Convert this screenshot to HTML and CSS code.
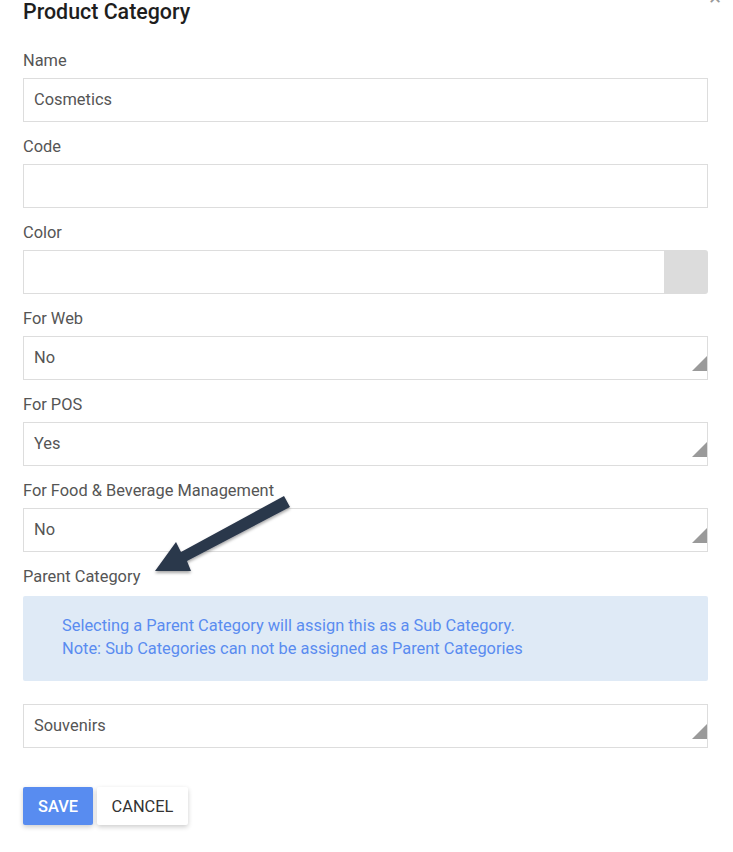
FILE: index.html
```html
<!DOCTYPE html>
<html>
<head>
<meta charset="utf-8">
<link rel="stylesheet" href="styles.css">
</head>
<body>
<div class="modal">
  <span class="close">×</span>
  <h1 class="title">Product Category</h1>

  <div class="field">
    <label class="label">Name</label>
    <div class="input">Cosmetics</div>
  </div>
  <div class="field">
    <label class="label">Code</label>
    <div class="input"></div>
  </div>
  <div class="field">
    <label class="label">Color</label>
    <div class="input-group">
      <div class="input grow"></div>
      <div class="addon"></div>
    </div>
  </div>
  <div class="field">
    <label class="label">For Web</label>
    <div class="input select">No</div>
  </div>
  <div class="field">
    <label class="label">For POS</label>
    <div class="input select">Yes</div>
  </div>
  <div class="field">
    <label class="label">For Food &amp; Beverage Management</label>
    <div class="input select">No</div>
  </div>
  <div class="field">
    <label class="label">Parent Category</label>
    <div class="info">
      <p>Selecting a Parent Category will assign this as a Sub Category.</p>
      <p>Note: Sub Categories can not be assigned as Parent Categories</p>
    </div>
    <div class="input select souvenirs">Souvenirs</div>
  </div>

  <div class="actions">
    <button class="btn btn-save">SAVE</button>
    <button class="btn btn-cancel">CANCEL</button>
  </div>

  <svg class="arrow" width="160" height="100" viewBox="140 490 160 100">
    <defs>
      <filter id="sh" x="-20%" y="-20%" width="140%" height="160%">
        <feDropShadow dx="0" dy="2" stdDeviation="1.5" flood-color="#000" flood-opacity="0.35"/>
      </filter>
    </defs>
    <polygon filter="url(#sh)" fill="#2b374c" points="155,571 176,542 181,552 284,496 290,507 187,561 191,571"/>
  </svg>
</div>
</body>
</html>
```
FILE: styles.css
```css
* { box-sizing: border-box; }
html, body {
  margin: 0;
  padding: 0;
  background: #fff;
}
body {
  font-family: Roboto, "Liberation Sans", Arial, sans-serif;
  width: 733px;
  height: 852px;
  overflow: hidden;
}
.modal {
  position: relative;
  padding: 0 25px 0 23px;
}
.close {
  position: absolute;
  right: 12px;
  top: -13px;
  font-size: 22px;
  color: #999;
  line-height: 22px;
}
.title {
  margin: 0 0 25px;
  font-size: 21.4px;
  line-height: 24px;
  font-weight: 500;
  color: #1e1e1e;
}
.field {
  display: flex;
  flex-direction: column;
  margin-bottom: 13px;
}
.label {
  display: block;
  font-size: 16.4px;
  line-height: 20px;
  color: #555;
  padding-top: 2px;
  margin-bottom: 7px;
}
.input {
  position: relative;
  height: 44px;
  border: 1px solid #ddd;
  padding: 0 10px;
  font-size: 16.4px;
  line-height: 42px;
  color: #555;
  background: #fff;
}
.input-group {
  display: flex;
}
.grow {
  flex: 1;
  border-right: none;
}
.addon {
  width: 44px;
  height: 44px;
  background: #dcdcdc;
  border-radius: 0 3px 3px 0;
}
.select::after {
  content: "";
  position: absolute;
  right: 0;
  bottom: 8px;
  width: 0;
  height: 0;
  border-left: 15px solid transparent;
  border-bottom: 15px solid #9a9a9a;
}
.info {
  margin-top: 2px;
  background: #dfeaf6;
  border-radius: 2px;
  padding: 18px 20px 21px 39px;
  color: #5a8cf0;
  font-size: 16.4px;
  line-height: 23px;
}
.info p {
  margin: 0;
}
.souvenirs {
  margin-top: 23px;
}
.actions {
  display: flex;
  gap: 4px;
  margin-top: 39px;
}
.btn {
  height: 38px;
  border: none;
  border-radius: 2px;
  font-family: Roboto, "Liberation Sans", Arial, sans-serif;
  font-size: 16.4px;
  padding: 0;
  box-shadow: 0 2px 5px rgba(0,0,0,0.2);
}
.btn-save {
  width: 70px;
  background: #588cf0;
  color: #fff;
  font-weight: 500;
}
.btn-cancel {
  width: 91px;
  background: #fff;
  color: #333;
}
.arrow {
  position: absolute;
  left: 140px;
  top: 490px;
}
```
